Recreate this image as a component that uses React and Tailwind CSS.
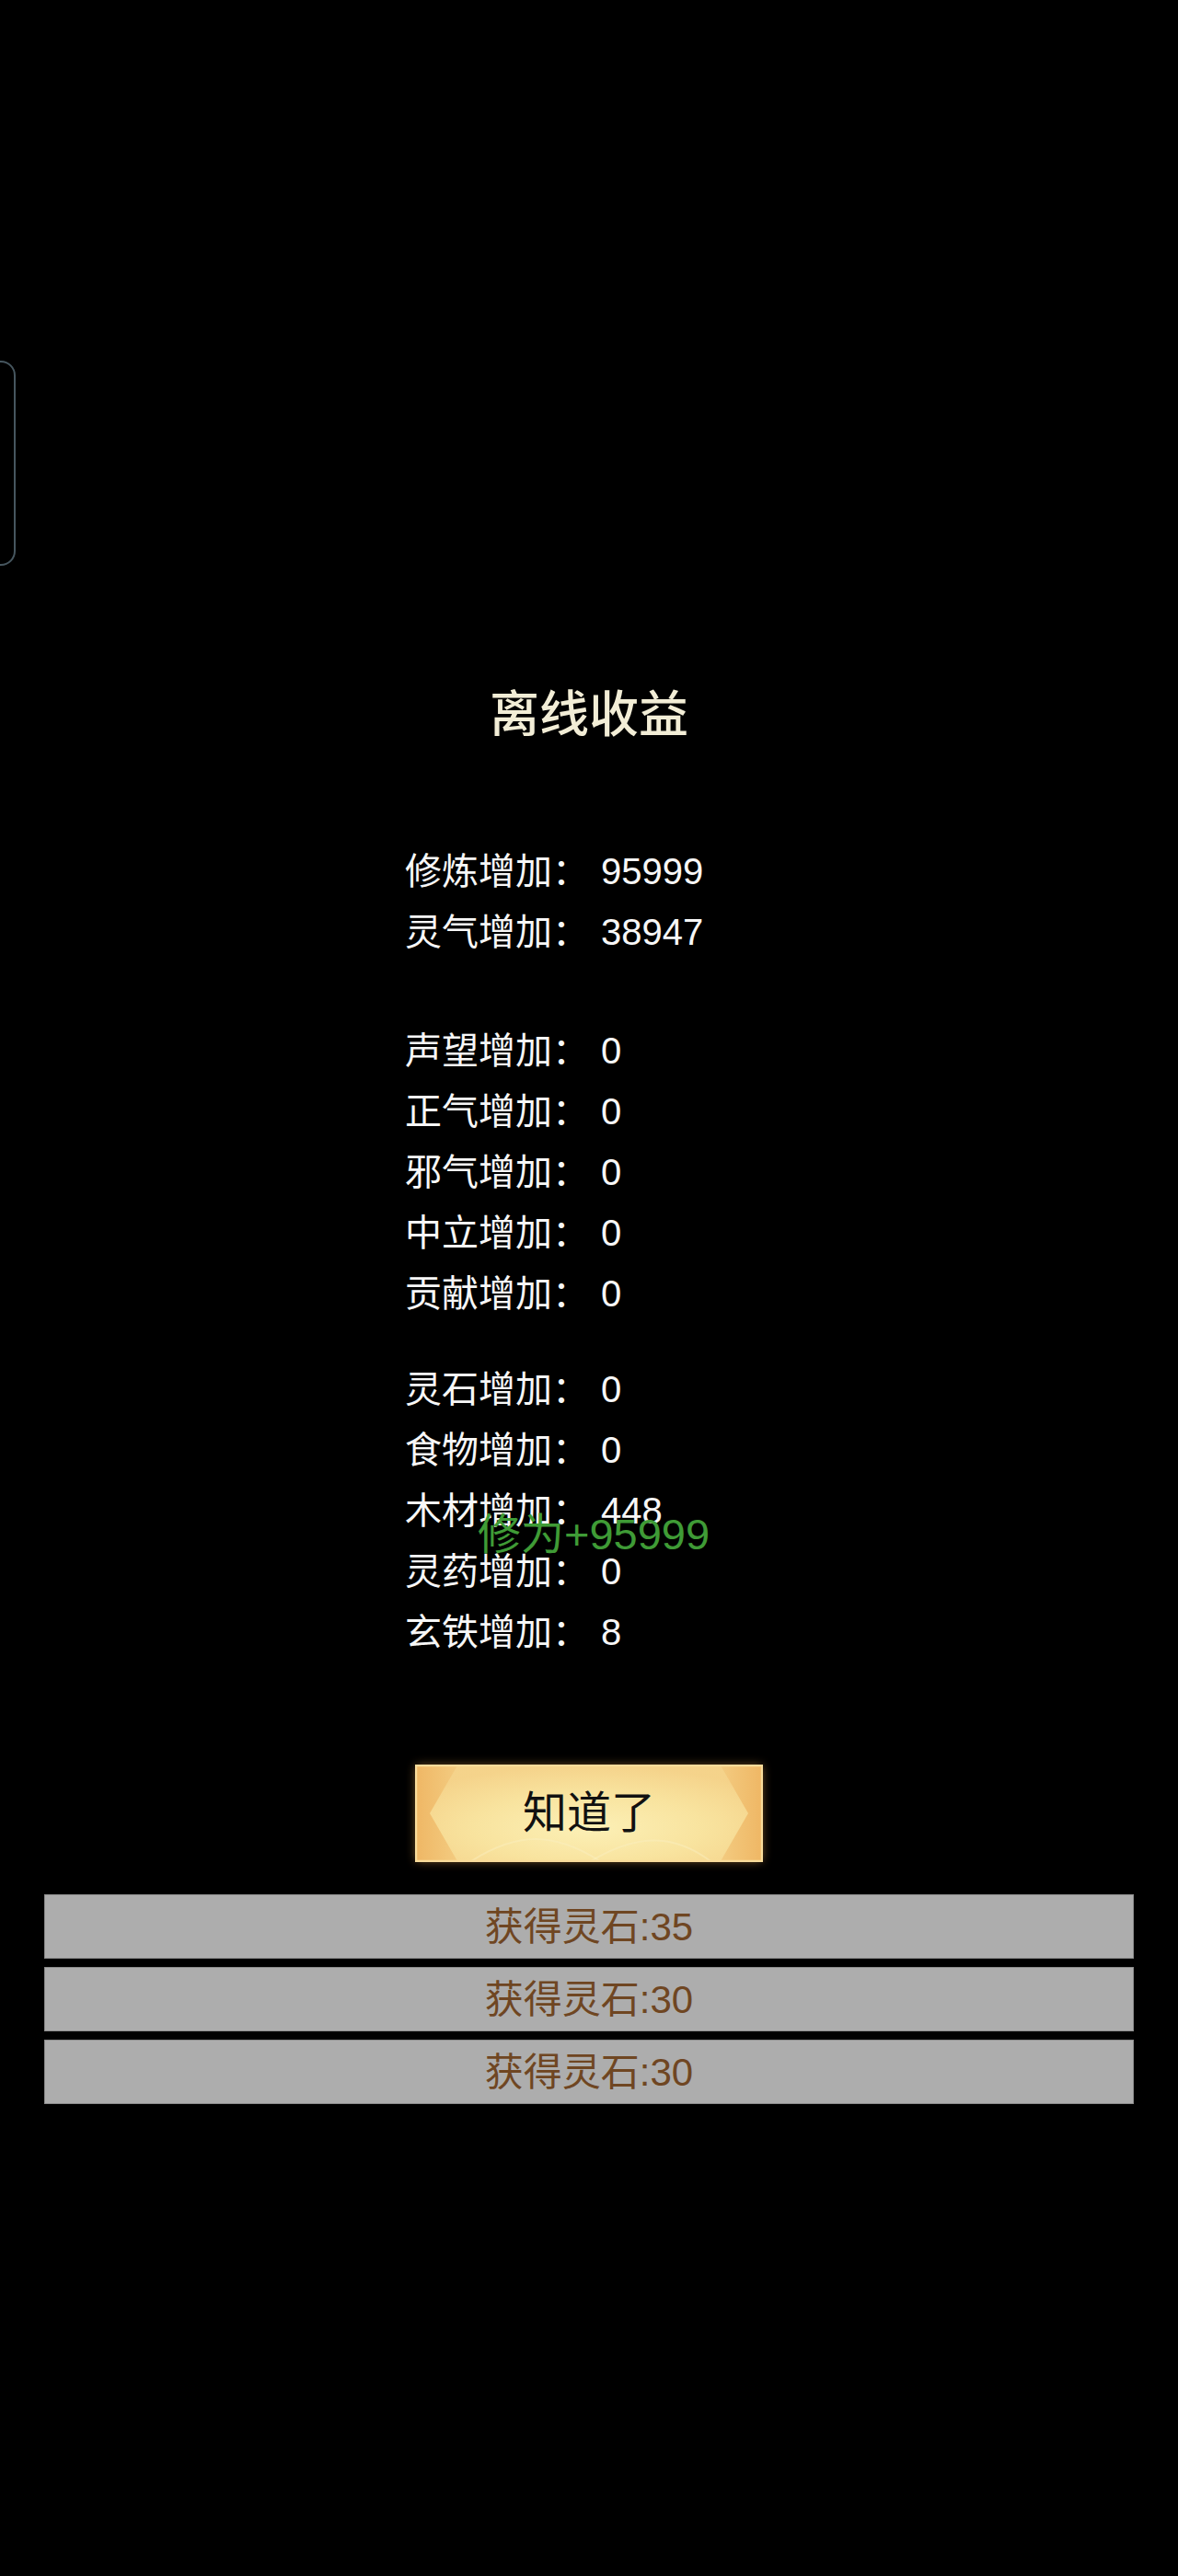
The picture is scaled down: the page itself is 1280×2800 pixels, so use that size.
import React from "react";

const groups = [
  [
    ["修炼增加：", "95999"],
    ["灵气增加：", "38947"],
  ],
  [
    ["声望增加：", "0"],
    ["正气增加：", "0"],
    ["邪气增加：", "0"],
    ["中立增加：", "0"],
    ["贡献增加：", "0"],
  ],
  [
    ["灵石增加：", "0"],
    ["食物增加：", "0"],
    ["木材增加：", "448"],
    ["灵药增加：", "0"],
    ["玄铁增加：", "8"],
  ],
];

const gains = ["获得灵石:35", "获得灵石:30", "获得灵石:30"];

function Row({ label, value }) {
  return (
    <div className="flex h-[66px] items-center text-[40px] leading-[66px] text-[#f7f7f7]">
      <span className="w-[213px] shrink-0">{label}</span>
      <span>{value}</span>
    </div>
  );
}

function GoldButton() {
  return (
    <button className="relative h-[104px] w-[376px] overflow-hidden bg-[#f0bd6c] shadow-[0_0_10px_rgba(240,170,80,0.5)] ring-1 ring-[#f8dc9c]">
      <svg className="absolute inset-0 h-full w-full" viewBox="0 0 376 104" preserveAspectRatio="none">
        <defs>
          <radialGradient id="hex" cx="50%" cy="65%" r="65%">
            <stop offset="0%" stopColor="#fdf4bc" />
            <stop offset="55%" stopColor="#f9e6a2" />
            <stop offset="100%" stopColor="#f5d48c" />
          </radialGradient>
          <linearGradient id="edge" x1="0" y1="0" x2="1" y2="0">
            <stop offset="0%" stopColor="#efb765" />
            <stop offset="12%" stopColor="#f3cb80" />
            <stop offset="88%" stopColor="#f3cb80" />
            <stop offset="100%" stopColor="#efb765" />
          </linearGradient>
        </defs>
        <rect width="376" height="104" fill="url(#edge)" />
        <polygon points="15,52 45,0 331,0 361,52 331,104 45,104" fill="url(#hex)" opacity="0.9" />
        <path d="M60 104 C110 72 150 72 200 104" stroke="#fbefc0" strokeWidth="2" fill="none" opacity="0.45" />
        <path d="M190 104 C240 74 280 74 320 104" stroke="#fbefc0" strokeWidth="2" fill="none" opacity="0.45" />
        <rect x="0.5" y="0.5" width="375" height="103" fill="none" stroke="#f9dc9a" strokeWidth="1.5" />
      </svg>
      <span className="relative text-[48px] leading-none text-[#111]">知道了</span>
    </button>
  );
}

export default function App() {
  return (
    <div className="relative h-[2800px] w-full overflow-hidden bg-black font-['Liberation_Sans','Noto_Sans_CJK_SC',sans-serif]">
      {/* side handle, mostly off screen */}
      <div className="absolute left-[-32px] top-[392px] h-[223px] w-[49px] rounded-[16px] border-2 border-[#46565f]" />

      <div className="flex flex-col items-center">
        <h1 className="mt-[741px] h-[72px] text-[54px] font-medium leading-[72px] text-[#f2edd6]">离线收益</h1>

        <div className="mt-[101px] flex w-full flex-col pl-[440px]">
          {groups.map((g, i) => (
            <div key={i} className={i === 1 ? "mt-[63px]" : i === 2 ? "mt-[38px]" : ""}>
              {g.map(([l, v]) => (
                <Row key={l} label={l} value={v} />
              ))}
            </div>
          ))}
        </div>

        <div className="mt-[112px]">
          <GoldButton />
        </div>

        <div className="mt-[36px] flex w-full flex-col gap-[9px] px-[48px]">
          {gains.map((t, i) => (
            <div
              key={i}
              className="flex h-[70px] items-center justify-center border border-[#8c8c8c] bg-[#adadad] text-[42px] text-[#6f4622]"
            >
              {t}
            </div>
          ))}
        </div>
      </div>

      {/* floating toast */}
      <div className="absolute left-[519px] top-[1639px] text-[47px] leading-[58px] text-[#3f9b36]">修为+95999</div>
    </div>
  );
}
